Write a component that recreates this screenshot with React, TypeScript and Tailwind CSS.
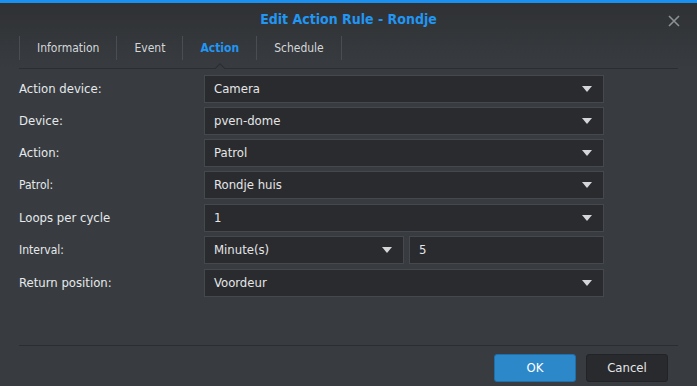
import React from "react";

const font = { fontFamily: '"DejaVu Sans Condensed", "DejaVu Sans", Tahoma, sans-serif' };

function Arrow() {
  return (
    <svg width="10" height="6" viewBox="0 0 10 6" className="shrink-0">
      <polygon points="0,0 10,0 5,6" fill="#d4d6d8" />
    </svg>
  );
}

function Select({ value, className = "" }: { value: string; className?: string }) {
  return (
    <div className={`h-[28px] flex items-center justify-between pl-[9px] pr-[11px] bg-[#2a2b2e] border border-[#45484c] text-[13px] text-[#e4e6e8] ${className}`}>
      <span>{value}</span>
      <Arrow />
    </div>
  );
}

function Row({ label, children, light, className = "" }: { label: string; children: React.ReactNode; light?: boolean; className?: string }) {
  return (
    <div className={`flex items-center h-[28px] ${className}`}>
      <div className={`w-[185px] text-[#e6e9ec] ${light ? "text-[12px]" : "text-[13px]"}`}>{label}</div>
      <div className="w-[400px] flex gap-[5px]">{children}</div>
    </div>
  );
}

export default function App() {
  const tabs = ["Information", "Event", "Action", "Schedule"];
  return (
    <div className="w-[697px] h-[386px] flex flex-col bg-[#383c40] overflow-hidden" style={font}>
      <div className="h-[3px] bg-[#1a91f0]" />
      <div className="bg-gradient-to-b from-[#2f3134] to-[#383c40] relative">
        <div className="h-[31px] flex items-center justify-center text-[14px] font-bold text-[#2196f3] pt-[1px]">
          Edit Action Rule - Rondje
        </div>
        <svg className="absolute right-[17px] top-[12px]" width="12" height="12" viewBox="0 0 12 12">
          <path d="M1 1 L11 11 M11 1 L1 11" stroke="#8d9094" strokeWidth="1.6" />
        </svg>
        <div className="mx-[19px] h-[35px] flex items-start border-b border-[#2b2d30] relative">
          {tabs.map((t) => (
            <div key={t} className="mt-[2px] h-[24px] flex items-center border-l border-[#4a4d51] relative">
              <div className={`px-[17px] text-[12px] ${t === "Action" ? "text-[#2196f3] font-bold" : "text-[#d4d7da]"}`}>{t}</div>
              {t === "Action" && (
                <svg className="absolute left-1/2 -translate-x-1/2 bottom-[-9px]" width="12" height="6" viewBox="0 0 12 6">
                  <polygon points="0,6 6,0 12,6" fill="#2b2d30" />
                  <polygon points="1.5,6 6,1.5 10.5,6" fill="#383c40" />
                </svg>
              )}
            </div>
          ))}
          <div className="mt-[2px] h-[24px] border-l border-[#4a4d51]" />
        </div>
      </div>
      <div className="px-[19px] pt-[6px] flex flex-col">
        <Row label="Action device:">
          <Select value="Camera" className="flex-1" />
        </Row>
        <Row label="Device:" className="mt-[4px]">
          <Select value="pven-dome" className="flex-1" />
        </Row>
        <Row label="Action:" className="mt-[4px]">
          <Select value="Patrol" className="flex-1" />
        </Row>
        <Row label="Patrol:" light className="mt-[4px]">
          <Select value="Rondje huis" className="flex-1" />
        </Row>
        <Row label="Loops per cycle" className="mt-[5px]">
          <Select value="1" className="flex-1" />
        </Row>
        <Row label="Interval:" light className="mt-[4px]">
          <Select value="Minute(s)" className="w-[200px]" />
          <div className="flex-1 h-[28px] flex items-center pl-[9px] bg-[#2a2b2e] border border-[#45484c] text-[13px] text-[#e4e6e8]">5</div>
        </Row>
        <Row label="Return position:" className="mt-[5px]">
          <Select value="Voordeur" className="flex-1" />
        </Row>
      </div>
      <div className="flex-1" />
      <div className="mx-[19px] border-t border-[#2b2d30]" />
      <div className="h-[40px] flex items-start pt-[8px] justify-end gap-[10px] pr-[29px]">
        <button className="w-[82px] h-[28px] rounded-[3px] bg-[#2d88ca] border border-[#1f6fa8] text-white text-[13px]">OK</button>
        <button className="w-[82px] h-[28px] rounded-[3px] bg-[#292a2d] border border-[#222326] text-[#e4e6e8] text-[13px]">Cancel</button>
      </div>
    </div>
  );
}
